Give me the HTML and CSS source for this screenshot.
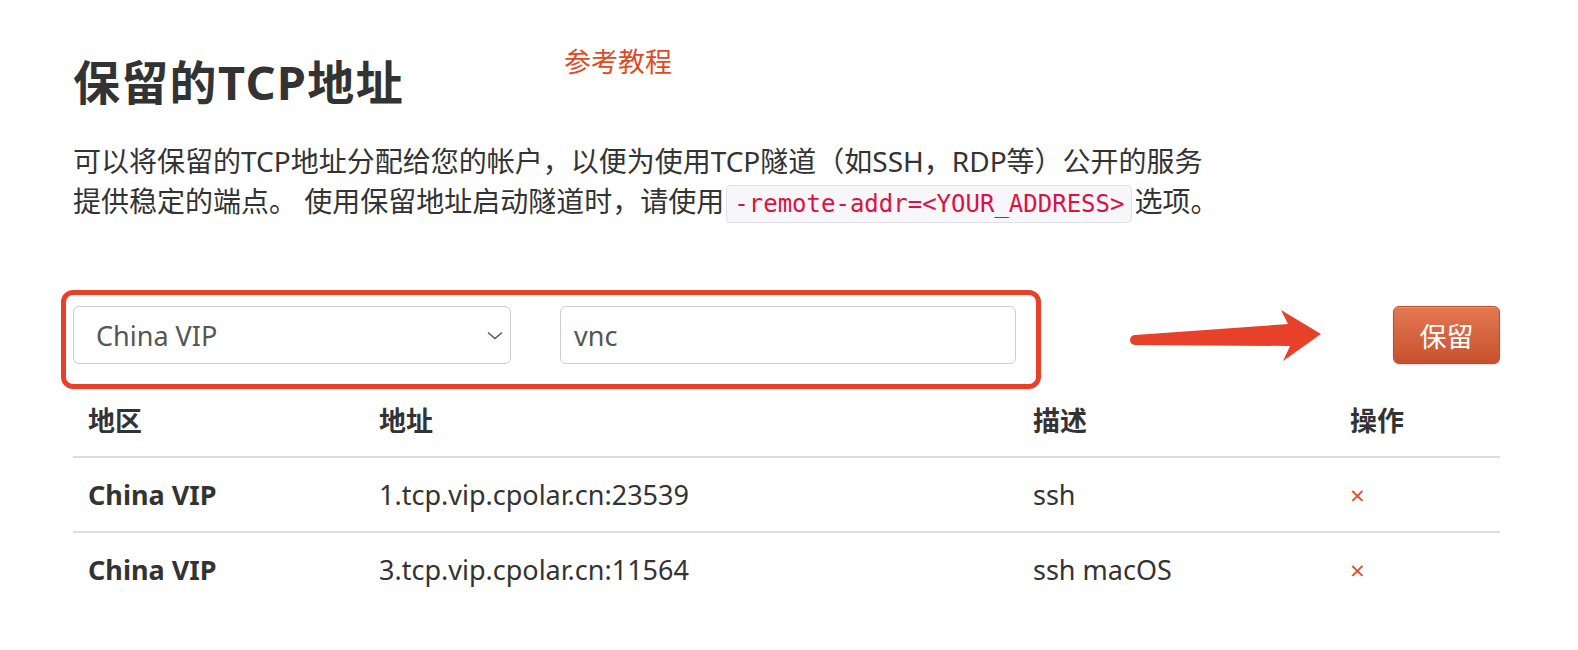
FILE: index.html
```html
<!DOCTYPE html>
<html lang="zh-CN">
  <head>
    <meta charset="UTF-8" />
    <meta name="viewport" content="width=device-width, initial-scale=1.0" />
    <title>保留的TCP地址</title>
    <link rel="stylesheet" href="styles.css">
  </head>
  <body>
    <div class="page">
      <header class="title-row">
        <h1>保留的TCP地址</h1>
        <a href="#" class="guide">参考教程</a>
      </header>

      <p class="intro">
        可以将保留的TCP地址分配给您的帐户，以便为使用TCP隧道（如SSH，RDP等）公开的服务提供稳定的端点。
        使用保留地址启动隧道时，请使用<code>-remote-addr=&lt;YOUR_ADDRESS&gt;</code>选项。
      </p>

      <!-- 表单 ========================================== -->
      <form class="reserve-form" onsubmit="return false">
        <div class="fields">
          <div class="select-wrap">
            <select id="region">
              <option>China VIP</option>
              <option>China Top</option>
              <option>United States</option>
            </select>
            <svg class="chevron" width="16" height="9" viewBox="0 0 16 9">
              <path d="M1 1.5 L8 7.5 L15 1.5" fill="none" stroke="#555" stroke-width="1.4" />
            </svg>
          </div>
          <input type="text" id="desc" value="vnc" />
        </div>

        <svg class="arrow" width="205" height="62" viewBox="0 0 205 62">
          <path d="M12 31 L165 20 L158 6 L198 30 L160 57 L167 42 L12 41 Z" fill="#e8412a" />
          <circle cx="12" cy="36" r="5" fill="#e8412a" />
        </svg>

        <button type="submit" class="btn-reserve">保留</button>
      </form>

      <!-- 列表 ========================================== -->
      <table class="addr-table">
        <thead>
          <tr>
            <th class="col-region">地区</th>
            <th class="col-addr">地址</th>
            <th class="col-desc">描述</th>
            <th>操作</th>
          </tr>
        </thead>
        <tbody>
          <tr>
            <td class="region">China VIP</td>
            <td>1.tcp.vip.cpolar.cn:23539</td>
            <td>ssh</td>
            <td><a href="#" class="del">×</a></td>
          </tr>
          <tr>
            <td class="region">China VIP</td>
            <td>3.tcp.vip.cpolar.cn:11564</td>
            <td>ssh macOS</td>
            <td><a href="#" class="del">×</a></td>
          </tr>
        </tbody>
      </table>
    </div>
  </body>
</html>
```

FILE: styles.css
```css
body {
  font-family: "Noto Sans", "Noto Sans CJK SC", sans-serif;
  background-color: #fff;
  color: #333;
  margin: 0;
  padding: 0;
}
.page {
  padding: 0 78px 40px 73px;
}
.title-row {
  display: flex;
  align-items: flex-start;
  padding-top: 42px;
}
h1 {
  margin: 12px 0 0 0;
  font-size: 47px;
  line-height: 56px;
  font-weight: 700;
  letter-spacing: 1.3px;
  color: #333;
}
.guide {
  margin-left: 160px;
  font-size: 27px;
  line-height: 40px;
  color: #dd4b25;
  text-decoration: none;
}
.intro {
  width: 1150px;
  margin: 31px 0 0 0;
  font-size: 28px;
  line-height: 40px;
  color: #333;
}
code {
  display: inline-block;
  font-family: "DejaVu Sans Mono", monospace;
  font-size: 24px;
  line-height: 28px;
  color: #dd1144;
  background-color: #f7f7f9;
  border: 1px solid #e1e1e8;
  border-radius: 4px;
  padding: 4px 7px;
  margin: 0 2px;
}

/* 表单 */
.reserve-form {
  display: flex;
  align-items: center;
  margin-top: 81px;
}
.fields {
  position: relative;
  display: flex;
  gap: 49px;
}
.fields::after {
  /* 红色标注框 */
  content: "";
  position: absolute;
  left: -12px;
  right: -25px;
  top: -16px;
  bottom: -25px;
  border: 5px solid #e8412a;
  border-radius: 12px;
  pointer-events: none;
}
.select-wrap {
  position: relative;
}
select,
input {
  height: 58px;
  box-sizing: border-box;
  border: 1px solid #ccc;
  border-radius: 6px;
  background-color: #fff;
  font-family: "Noto Sans", "Noto Sans CJK SC", sans-serif;
  font-size: 27px;
  color: #555;
  outline: none;
}
select {
  width: 438px;
  padding: 0 40px 0 22px;
  appearance: none;
  -webkit-appearance: none;
}
.chevron {
  position: absolute;
  right: 8px;
  top: 25px;
  pointer-events: none;
}
input {
  width: 456px;
  padding: 0 13px;
}
.arrow {
  margin-left: 107px;
  display: block;
}
.btn-reserve {
  margin-left: auto;
  width: 107px;
  height: 58px;
  border: 1px solid #bf4d2b;
  border-radius: 6px;
  background: linear-gradient(#e37853, #c8512d);
  color: #fff;
  font-family: "Noto Sans", "Noto Sans CJK SC", sans-serif;
  font-size: 27px;
  box-shadow: inset 0 1px 0 rgba(255, 255, 255, 0.2), 0 1px 2px rgba(0, 0, 0, 0.15);
  cursor: pointer;
}

/* 列表 */
.addr-table {
  width: 100%;
  margin-top: 17px;
  border-collapse: collapse;
  font-size: 27px;
}
.addr-table th,
.addr-table td {
  height: 73px;
  padding: 0 15px;
  text-align: left;
  vertical-align: middle;
}
.addr-table th {
  font-weight: 700;
  color: #333;
}
.addr-table td {
  border-top: 2px solid #ddd;
  color: #333;
}
.col-region {
  width: 261px;
}
.col-addr {
  width: 624px;
}
.col-desc {
  width: 287px;
}
.addr-table td.region {
  font-weight: 700;
}
.del {
  color: #d9532c;
  text-decoration: none;
  font-size: 26px;
}
```
